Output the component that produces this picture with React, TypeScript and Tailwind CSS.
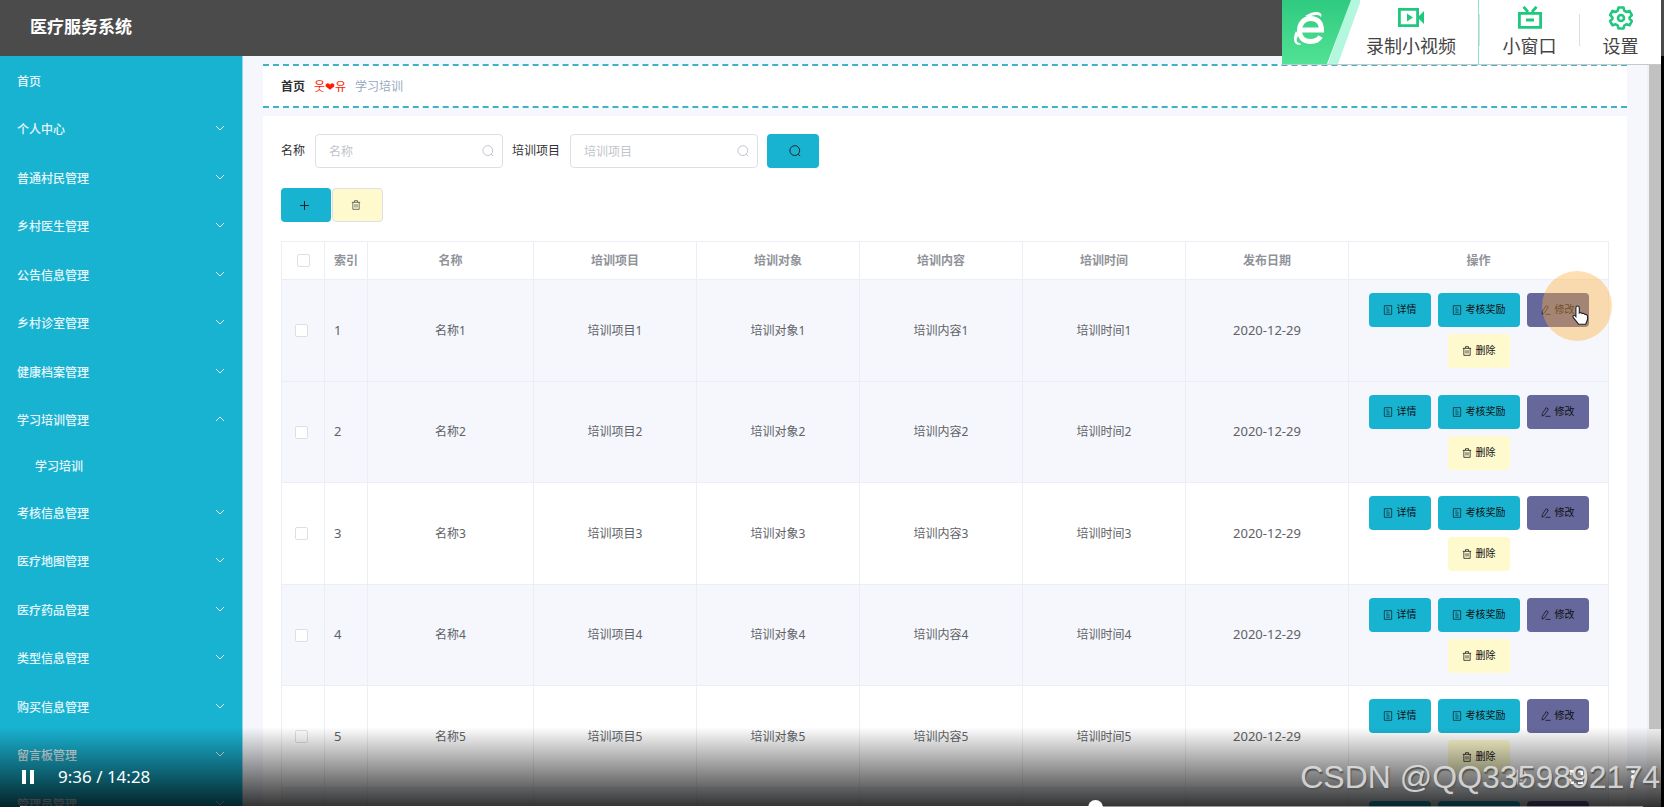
import React from 'react';

type MenuItem = { label: string; open?: boolean; leaf?: boolean; children?: string[] };

const menu: MenuItem[] = [
  { label: '首页', leaf: true },
  { label: '个人中心' },
  { label: '普通村民管理' },
  { label: '乡村医生管理' },
  { label: '公告信息管理' },
  { label: '乡村诊室管理' },
  { label: '健康档案管理' },
  { label: '学习培训管理', open: true, children: ['学习培训'] },
  { label: '考核信息管理' },
  { label: '医疗地图管理' },
  { label: '医疗药品管理' },
  { label: '类型信息管理' },
  { label: '购买信息管理' },
  { label: '留言板管理' },
  { label: '管理员管理' },
];

const columns = ['培训项目', '培训对象', '培训内容', '培训时间', '发布日期'];
const rows = [1, 2, 3, 4, 5, 6];

const Chevron = ({ up }: { up?: boolean }) => (
  <svg className="mb-1 h-2.5 w-2.5" viewBox="0 0 10 10" fill="none" stroke="currentColor">
    <path d={up ? 'M1 7l4-4 4 4' : 'M1 3l4 4 4-4'} />
  </svg>
);

const SearchIcon = () => (
  <svg className="h-3 w-3" viewBox="0 0 12 12" fill="none" stroke="currentColor">
    <circle cx="5.8" cy="5.6" r="4.9" />
    <path d="M9.2 9.2l2 2" />
  </svg>
);

const TrashIcon = () => (
  <svg className="h-2.5 w-2.5" viewBox="0 0 12 12" fill="none" stroke="currentColor" strokeWidth="0.9">
    <path d="M1 2.8h10M2.2 2.8v8.4h7.6V2.8M4.2 2.6V.8h3.6v1.8M4.8 5v4M7.2 5v4" />
  </svg>
);

const DocIcon = () => (
  <svg className="h-2.5 w-2.5" viewBox="0 0 12 12" fill="none" stroke="currentColor" strokeWidth="0.8">
    <path d="M1.6.8h8.800v10.400H1.600zM4 3.600h2.500M4 6h4M4 8.600h4" />
  </svg>
);

const EditIcon = () => (
  <svg className="h-2.5 w-2.5" viewBox="0 0 12 12" fill="none" stroke="currentColor" strokeWidth="0.9">
    <path d="M6.200.8l2.600 1.600-4.600 7-2.800 1.600.2-3.200zM5.400 11.200h6" />
  </svg>
);

const Checkbox = ({ label }: { label: string }) => (
  <input
    type="checkbox"
    aria-label={label}
    className="block h-[13px] w-[13px] appearance-none rounded-xs border border-[#dcdfe6] bg-white"
  />
);

const SearchField = ({ id, label }: { id: string; label: string }) => (
  <div className="flex items-center gap-2.5">
    <label htmlFor={id} className="text-[#303133]">
      {label}
    </label>
    <div className="relative">
      <input
        id={id}
        type="text"
        placeholder={label}
        className="block h-[34px] w-[188px] rounded border border-[#dcdfe6] bg-white pr-8 pl-[13px] text-[#606266] placeholder:text-[#c0c4cc]"
      />
      <span className="absolute top-[11px] right-[9px] text-[#c0c4cc]">
        <SearchIcon />
      </span>
    </div>
  </div>
);

const Sidebar = () => (
  <nav className="w-[243px] shrink-0 border-r border-[#8fd6e6] bg-[#19b3d2] pt-px font-medium text-[#e8f7fb]">
    <ul>
      {menu.map((item) => (
        <li key={item.label} className="group">
          <a href="#" className="flex h-[49px] items-center justify-between pr-[17px] pl-[17px] group-even:h-12">
            <span>{item.label}</span>
            {!item.leaf && <Chevron up={item.open} />}
          </a>
          {item.children?.map((child) => (
            <a key={child} href="#" className="flex h-11 items-center pl-[35px]">
              {child}
            </a>
          ))}
        </li>
      ))}
    </ul>
  </nav>
);

const Actions = () => (
  <div className="flex flex-wrap justify-center gap-[7px] text-[10px] text-[#101010]">
    <button type="button" className="flex h-[34px] items-center gap-1 rounded bg-[#19b3d2] px-3.5">
      <DocIcon />
      详情
    </button>
    <button type="button" className="flex h-[34px] items-center gap-1 rounded bg-[#19b3d2] px-3.5">
      <DocIcon />
      考核奖励
    </button>
    <button type="button" className="flex h-[34px] items-center gap-1 rounded bg-[#66689c] px-3.5">
      <EditIcon />
      修改
    </button>
    <button type="button" className="flex h-[34px] items-center gap-1 rounded bg-[#fefacd] px-3.5">
      <TrashIcon />
      删除
    </button>
  </div>
);

const DataTable = () => (
  <table className="w-full table-fixed border-collapse text-center text-[#606266]">
    <colgroup>
      <col className="w-[43px]" />
      <col className="w-[43px]" />
      <col className="w-[166px]" />
      <col />
      <col />
      <col />
      <col />
      <col />
      <col className="w-[260px]" />
    </colgroup>
    <thead>
      <tr className="h-[38px] text-[#909399]">
        <th className="border border-[#ebeef5] pl-[15px]">
          <Checkbox label="全选" />
        </th>
        <th className="border border-[#ebeef5] font-bold">索引</th>
        <th className="border border-[#ebeef5] font-bold">名称</th>
        {columns.map((c) => (
          <th key={c} className="border border-[#ebeef5] font-bold">
            {c}
          </th>
        ))}
        <th className="border border-[#ebeef5] font-bold">操作</th>
      </tr>
    </thead>
    <tbody>
      {rows.map((n) => (
        <tr key={n} className="h-[101px] odd:h-[102px] first:bg-[#f5f7fc] even:bg-[#f5f7fc]">
          <td className="border border-[#ebeef5] pl-[13px]">
            <Checkbox label={`选择${n}`} />
          </td>
          <td className="border border-[#ebeef5] pl-[9px] text-left text-[13px]">{n}</td>
          <td className="border border-[#ebeef5]">名称{n}</td>
          <td className="border border-[#ebeef5]">培训项目{n}</td>
          <td className="border border-[#ebeef5]">培训对象{n}</td>
          <td className="border border-[#ebeef5]">培训内容{n}</td>
          <td className="border border-[#ebeef5]">培训时间{n}</td>
          <td className="border border-[#ebeef5] text-[13px]">2020-12-29</td>
          <td className="border border-[#ebeef5] px-2.5">
            <Actions />
          </td>
        </tr>
      ))}
    </tbody>
  </table>
);

// green recorder bar of the browser, floats over the page
const RecorderBar = () => (
  <div className="absolute top-0 right-[3px] z-20 flex h-[65px] border-b border-[#c8c8c8] bg-white text-lg leading-6 text-[#444]">
    <svg className="h-16 w-[78px]" viewBox="0 0 78 64">
      <defs>
        <linearGradient id="green" x1="0" y1="0" x2="0" y2="1">
          <stop offset="0" stopColor="#2fca80" />
          <stop offset="1" stopColor="#52e294" />
        </linearGradient>
      </defs>
      <path d="M68 0h11L56 64H46z" fill="#b4f7df" />
      <path d="M0 0h69L45 64H0z" fill="url(#green)" />
      <path
        d="M18 30h21.500c0-7.500-4-11.500-11-11.500S17.500 24 17.500 30.500s4 11 11 11c4.500 0 8-1.500 10-5"
        fill="none"
        stroke="#fff"
        strokeWidth="5"
      />
      <path
        d="M23 16c6-4.500 16-6 16.500-1 0 .8-.3 1.500-.8 2.200-.5-3-6-3-12.700-.2zM14 31c-3.500 7-3 15.500 5.500 13.500l-2-1.500c-3.500 0-3.500-4-1-8z"
        fill="#fff"
      />
    </svg>
    <button type="button" className="flex w-[119px] flex-col items-center border-r border-[#8fe8bd] pt-1.5 pr-4">
      <svg className="h-6 w-7" viewBox="0 0 28 24" fill="none" stroke="#1fc87d" strokeWidth="2.800">
        <path d="M2.400 3.400h18.200v16.200H2.400z" />
        <path d="M10 7.400l6 4.100-6 4.100zM22 10l5-5v13l-5-5z" fill="#1fc87d" stroke="none" />
      </svg>
      <span className="mt-1">录制小视频</span>
    </button>
    <span className="mt-3.5 h-8 w-px bg-[#ddd]" />
    <button type="button" className="flex w-[99px] flex-col items-center pt-1.5">
      <svg className="h-6 w-6" viewBox="0 0 24 24" fill="none" stroke="#1fc87d" strokeWidth="2.800">
        <path d="M1.400 7.400h21.200v14H1.400zM8 14h8M5.500.8L10 6M18.500.8L14 6" />
      </svg>
      <span className="mt-1">小窗口</span>
    </button>
    <span className="mt-3.5 h-8 w-px bg-[#ddd]" />
    <button type="button" className="flex w-[81px] flex-col items-center pt-1.5">
      <svg className="h-6 w-6" viewBox="0 0 24 24" fill="none" stroke="#1fc87d" strokeWidth="2.600" strokeLinejoin="round">
        <path d="M9.500 1.500h5l.8 3.200 2 1.200 3.200-1 2.400 4.200-2.300 2.300v1.400l2.300 2.300-2.400 4.200-3.200-1-2 1.200-.8 3h-5l-.8-3-2-1.200-3.200 1-2.400-4.200 2.300-2.300v-1.400L1.100 9.100l2.400-4.200 3.200 1 2-1.200z" />
        <circle cx="12" cy="12" r="3" />
      </svg>
      <span className="mt-1">设置</span>
    </button>
  </div>
);

const Pointer = () => (
  <div className="absolute top-[271px] right-[52px] z-10 h-[70px] w-[70px] rounded-full bg-[#ffb03b]/40">
    <svg className="absolute top-[34px] left-[30px] h-5 w-[18px]" viewBox="0 0 18 20">
      <path
        d="M5.500 1c1.200 0 1.800.8 1.800 1.800V8c1-.6 2.400-.4 2.800.6 1-.5 2.400-.2 2.800.8 1.300-.3 2.600.4 2.600 1.800v3.600l-1.800 4.400H6.500L1.200 12.400c-.8-1.300.6-2.700 1.800-1.800l.9 1V2.800C3.900 1.800 4.500 1 5.500 1z"
        fill="#fff"
        stroke="#222"
        strokeWidth="1.100"
      />
    </svg>
  </div>
);

const PlayerControls = () => (
  <div className="absolute inset-x-0 bottom-0 z-30 h-20 overflow-hidden bg-linear-to-b from-black/0 to-black/80 text-white">
    <div className="flex h-full items-center pt-5 pr-[29px] pl-[22px]">
      <button type="button" aria-label="暂停" className="flex gap-1">
        <span className="h-3.5 w-1 bg-white" />
        <span className="h-3.5 w-1 bg-white" />
      </button>
      <span className="ml-6 text-[17px]">9:36 / 14:28</span>
      <button type="button" aria-label="音量" className="ml-auto text-white/50">
        <svg className="h-[18px] w-[18px]" viewBox="0 0 18 18" fill="currentColor">
          <path d="M0 6h4l5-5v16l-5-5H0z" />
          <path d="M11.500 5.500c3 1.500 3 5.500 0 7M11.500 1.500c7 2.500 7 12.500 0 15" fill="none" stroke="currentColor" strokeWidth="2" />
        </svg>
      </button>
      <button type="button" aria-label="全屏" className="ml-[42px]">
        <svg className="h-3.5 w-3.5" viewBox="0 0 14 14" fill="none" stroke="currentColor" strokeWidth="2.400">
          <path d="M1.200 5V1.200H5M9 1.200h3.800V5M12.800 9v3.800H9M5 12.800H1.200V9" />
        </svg>
      </button>
      <button type="button" aria-label="更多" className="ml-12">
        <svg className="h-4 w-1" viewBox="0 0 4 16" fill="currentColor">
          <circle cx="2" cy="2" r="2" />
          <circle cx="2" cy="8" r="2" />
          <circle cx="2" cy="14" r="2" />
        </svg>
      </button>
    </div>
    <div className="absolute right-[21px] bottom-0 left-5 h-px bg-white/50">
      <div className="relative h-px w-[66%] bg-white">
        <span className="absolute -top-1.5 -right-3 h-[15px] w-[15px] rounded-full bg-white" />
      </div>
    </div>
  </div>
);

const App = () => {
  return (
    <div className="relative flex h-screen flex-col overflow-hidden bg-[#f5f7fc] font-['Noto_Sans','Noto_Sans_CJK_SC',sans-serif] text-xs">
      <header className="flex h-14 shrink-0 items-center bg-[#4b4b4c] pb-0.5 pl-[30px]">
        <h1 className="text-[17px] font-bold text-white">医疗服务系统</h1>
      </header>
      <div className="flex min-h-0 flex-1">
        <Sidebar />
        <main className="min-w-0 flex-1 overflow-hidden px-5 pt-2">
          <div className="flex h-11 items-center gap-[9px] border-y-2 border-dashed border-[#3fb3c6] bg-white px-[18px] pt-0.5">
            <a href="#" className="font-bold text-[#303133]">
              首页
            </a>
            <span className="text-[#ff1a00]">웃❤유</span>
            <span className="text-[#97a8be]">学习培训</span>
          </div>
          <section className="mt-2 bg-white px-[18px] pt-[18px]">
            <form className="flex items-center gap-[9px]">
              <SearchField id="name" label="名称" />
              <SearchField id="project" label="培训项目" />
              <button
                type="button"
                aria-label="查询"
                className="flex h-[34px] w-[52px] items-center justify-center rounded bg-[#19b3d2] pl-1 text-[#222]"
              >
                <SearchIcon />
              </button>
            </form>
            <div className="mt-5 mb-[19px] flex gap-px">
              <button
                type="button"
                aria-label="新增"
                className="flex h-[34px] w-[50px] items-center justify-center rounded bg-[#19b3d2] pr-1 text-[#222]"
              >
                <svg className="h-[9px] w-[9px]" viewBox="0 0 9 9" stroke="currentColor">
                  <path d="M0 4.500h9M4.500 0v9" />
                </svg>
              </button>
              <button
                type="button"
                aria-label="删除"
                className="flex h-[34px] w-[51px] items-center justify-center rounded border border-[#dcdfe6] bg-[#fefacd] pr-1 text-[#444]"
              >
                <TrashIcon />
              </button>
            </div>
            <DataTable />
          </section>
        </main>
        <div className="w-3.5 shrink-0 bg-[#f1f1f1] pl-0.5">
          <div className="h-[673px] bg-[#c1c1c1]" />
        </div>
        <div className="w-[3px] shrink-0 bg-black" />
      </div>
      <RecorderBar />
      <Pointer />
      <PlayerControls />
      <div className="absolute right-1 bottom-2.5 z-40 font-['Liberation_Sans',sans-serif] text-[32px] leading-10 text-[#e0e0e0]/90 [text-shadow:1px_2px_1px_#555]">
        CSDN @QQ3359892174
      </div>
    </div>
  );
};

export default App;
